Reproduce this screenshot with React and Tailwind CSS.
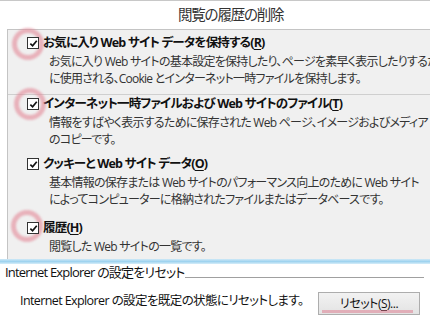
import React from 'react';

const Check = () => (
  <span className="relative z-10 flex h-[12px] w-[12px] shrink-0 items-center justify-center border border-[#333] bg-white">
    <svg viewBox="0 0 10 10" className="h-[9px] w-[9px]">
      <path d="M1.5 5.2 L4 7.6 L8.6 2" fill="none" stroke="#111" strokeWidth="1.9" />
    </svg>
  </span>
);

const Key = ({ k }) => (
  <>
    (<span className="underline underline-offset-2">{k}</span>)
  </>
);

const Item = ({ label, k, lines, className = '' }) => (
  <div className={className}>
    <div className="flex h-[18px] items-center gap-[4px] pl-[19px]">
      <Check />
      <span className="whitespace-nowrap text-[12.5px] font-bold tracking-[-0.8px] text-[#111]">
        {label}
        <Key k={k} />
      </span>
    </div>
    <div className="mt-[2px] whitespace-nowrap pl-[41px] text-[12px] leading-[16.5px] tracking-[-0.75px] text-[#333]">
      {lines.map((l) => (
        <div key={l}>{l}</div>
      ))}
    </div>
  </div>
);

const Ring = ({ className }) => (
  <div
    className={`absolute h-[32px] w-[32px] rounded-full border-[5px] border-[rgba(226,135,150,0.6)] blur-[1px] ${className}`}
  />
);

export default function App() {
  return (
    <div className="relative h-[322px] w-[430px] overflow-hidden bg-white font-['Open_Sans','Noto_Sans_CJK_JP',sans-serif] [font-feature-settings:'palt']">
      {/* header */}
      <div className="flex h-[29px] items-center border-t border-[#c8c8c8] pl-[178px]">
        <span className="text-[14.5px] tracking-[-1.2px] text-[#333]">閲覧の履歴の削除</span>
      </div>

      {/* options panel */}
      <div className="ml-[7px] h-[230px] border-l border-t border-[#c4c4c4] bg-[#f0f0f0] pt-[4px]">
        <Item
          label="お気に入り Web サイト データを保持する"
          k="R"
          lines={[
            'お気に入り Web サイトの基本設定を保持したり、ページを素早く表示したりするため',
            'に使用される、Cookie とインターネット一時ファイルを保持します。',
          ]}
        />
        <div className="mt-[7px] h-px bg-[#cfcfcf]" />
        <Item
          label="インターネット一時ファイルおよび Web サイトのファイル"
          k="T"
          lines={[
            '情報をすばやく表示するために保存された Web ページ、イメージおよびメディア',
            'のコピーです。',
          ]}
        />
        <Item
          className="mt-[7px]"
          label="クッキーと Web サイト データ"
          k="O"
          lines={[
            '基本情報の保存または Web サイトのパフォーマンス向上のために Web サイト',
            'によってコンピューターに格納されたファイルまたはデータベースです。',
          ]}
        />
        <Item className="mt-[11px]" label="履歴" k="H" lines={['閲覧した Web サイトの一覧です。']} />
      </div>

      {/* torn edge */}
      <div className="h-[5px] bg-[linear-gradient(180deg,#cfe9f7,#9fd3ef_50%,#d6edf9)]" />

      {/* reset section */}
      <div className="flex h-[18px] items-center pl-[5px] pr-[6px]">
        <span className="whitespace-nowrap text-[13px] tracking-[-0.8px] text-[#111]">
          Internet Explorer の設定をリセット
        </span>
        <div className="mt-[8px] h-px flex-1 bg-[#a0a0a0]" />
      </div>
      <div className="mt-[6px] flex items-center pl-[20px]">
        <span className="whitespace-nowrap text-[12.5px] tracking-[-0.6px] text-[#111]">
          Internet Explorer の設定を既定の状態にリセットします。
        </span>
        <button className="relative ml-auto mr-[10px] mt-[4px] h-[23px] w-[102px] border border-[#adadad] bg-[linear-gradient(180deg,#f2f2f2,#e3e3e3)] text-[12px] tracking-[-0.5px] text-[#111]">
          リセット
          <Key k="S" />
          ...
          <span className="absolute bottom-[1px] left-[3px] right-[6px] h-[3px] bg-[rgba(222,120,140,0.5)] blur-[0.5px]" />
        </button>
      </div>

      <Ring className="left-[12px] top-[28px]" />
      <Ring className="left-[14px] top-[88px]" />
      <Ring className="left-[11px] top-[210px]" />
    </div>
  );
}
